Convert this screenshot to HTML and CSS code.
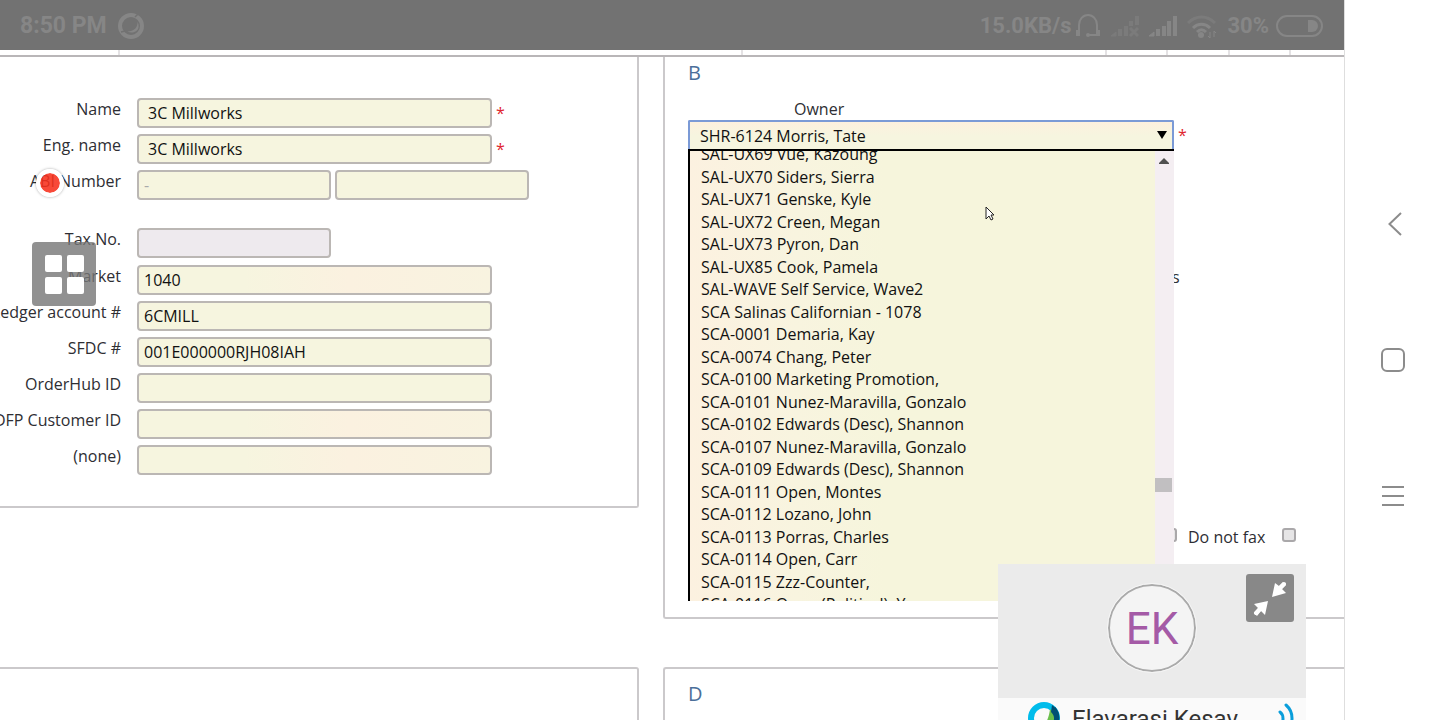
FILE: index.html
```html
<!DOCTYPE html>
<html lang="en">
<head>
<meta charset="utf-8">
<title>Customer details</title>
<link rel="stylesheet" href="styles.css">
</head>
<body>
<main class="screen">
  <header class="status">
    <span class="status-time">8:50 PM</span>
    <svg class="status-app" width="26" height="26" viewBox="0 0 26 26" fill="none" stroke="currentColor">
      <circle cx="13" cy="13" r="11" stroke-width="4"/>
      <path d="M19.500 9c.5 5-3.500 9.500-10 9.500 4 2.500 10 .5 11-4 .3-2 0-4-1-5.500z" fill="currentColor" stroke="none"/>
      <path d="M17 4l3-3M3 19l4-1" stroke="#727272" stroke-width="1.500"/>
    </svg>
    <span class="status-speed">15.0KB/s</span>
    <svg class="status-headset" width="26" height="26" viewBox="0 0 26 26" fill="none" stroke="currentColor" stroke-width="2">
      <path d="M4 20V12a9 10 0 0 1 18 0v8M13 22h9"/>
      <path d="M3 17v6M23 17v6" stroke-width="4"/><circle cx="13" cy="22" r="2" fill="currentColor" stroke="none"/>
    </svg>
    <svg class="status-nosim" width="30" height="24" viewBox="0 0 30 24" fill="none" stroke="#7b7b7b" stroke-width="4">
      <path d="M1 22l5-4v4z" stroke-width="1" fill="#7b7b7b"/><path d="M10 22v-7M16 22V12M21 12V7M27 11V2"/><path d="M20 14l8 8M28 14l-8 8" stroke-width="3"/>
    </svg>
    <svg class="status-signal" width="30" height="24" viewBox="0 0 30 24" fill="none" stroke="currentColor" stroke-width="4">
      <path d="M1 22l5-4v4z" stroke-width="1" fill="currentColor"/><path d="M10 22v-7M16 22V12M21 22V7M27 22V2"/>
    </svg>
    <svg class="status-wifi" width="30" height="26" viewBox="0 0 30 26" fill="none" stroke="#7b7b7b" stroke-width="3">
      <path d="M1 10c8-8 19-8 27 0"/><path d="M6 15c5-5 12-5 17 0M10 19c3-3 6-3 9 0" stroke="currentColor"/>
      <circle cx="14" cy="22" r="3" fill="currentColor" stroke="none"/>
      <path d="M23 19v6l-2-2M27 24v-6l2 2" stroke="currentColor" stroke-width="1"/>
    </svg>
    <span>30%</span>
    <svg class="status-battery" width="48" height="22" viewBox="0 0 48 22" fill="none" stroke="currentColor" stroke-width="2">
      <rect x="1" y="1" width="45" height="20" rx="10"/>
      <path d="M32 5h4a6 6 0 0 1 0 12h-4z" fill="currentColor" stroke="none"/>
    </svg>
  </header>
  <div class="tabs"><i></i><i></i><i></i><i></i><i></i><i></i><i></i></div>

  <div class="panels">
    <section class="panel panel-a">
      <form class="form">
        <div class="row"><label for="name">Name</label><div class="field"><input class="box roomy" id="name" value="3C Millworks"><b class="star">*</b></div></div>
        <div class="row"><label for="eng">Eng. name</label><div class="field"><input class="box roomy" id="eng" value="3C Millworks"><b class="star">*</b></div></div>
        <div class="row"><label for="abi">ABI Number</label><div class="field"><input class="box half faint" id="abi" value="-"><input class="box half" aria-label="ABI Number, part 2"></div></div>
        <div class="row apart"><label for="tax">Tax.No.</label><div class="field"><input class="box half locked" id="tax" readonly></div></div>
        <div class="row"><label for="market">Market</label><div class="field"><input class="box warm" id="market" value="1040"></div></div>
        <div class="row"><label for="ledger">Ledger account #</label><div class="field"><input class="box" id="ledger" value="6CMILL"></div></div>
        <div class="row"><label for="sfdc">SFDC #</label><div class="field"><input class="box" id="sfdc" value="001E000000RJH08IAH"></div></div>
        <div class="row"><label for="hub">OrderHub ID</label><div class="field"><input class="box" id="hub"></div></div>
        <div class="row"><label for="dfp">DFP Customer ID</label><div class="field"><input class="box warm" id="dfp"></div></div>
        <div class="row"><label for="none">(none)</label><div class="field"><input class="box warm" id="none"></div></div>
      </form>
    </section>

    <section class="panel panel-b">
      <h2>B</h2>
      <label class="owner-label" for="owner">Owner</label>
      <div class="owner">
        <div class="combo">
          <select id="owner"><option>SHR-6124 Morris, Tate</option></select>
          <svg class="combo-arrow" width="10" height="8" viewBox="0 0 10 8"><path d="M0 0h10L5 8z"/></svg>
          <div class="menu">
            <ul class="options">
              <li>SAL-UX69 Vue, Kazoung</li>
              <li>SAL-UX70 Siders, Sierra</li>
              <li>SAL-UX71 Genske, Kyle</li>
              <li>SAL-UX72 Creen, Megan</li>
              <li>SAL-UX73 Pyron, Dan</li>
              <li>SAL-UX85 Cook, Pamela</li>
              <li>SAL-WAVE Self Service, Wave2</li>
              <li>SCA Salinas Californian - 1078</li>
              <li>SCA-0001 Demaria, Kay</li>
              <li>SCA-0074 Chang, Peter</li>
              <li>SCA-0100 Marketing Promotion,</li>
              <li>SCA-0101 Nunez-Maravilla, Gonzalo</li>
              <li>SCA-0102 Edwards (Desc), Shannon</li>
              <li>SCA-0107 Nunez-Maravilla, Gonzalo</li>
              <li>SCA-0109 Edwards (Desc), Shannon</li>
              <li>SCA-0111 Open, Montes</li>
              <li>SCA-0112 Lozano, John</li>
              <li>SCA-0113 Porras, Charles</li>
              <li>SCA-0114 Open, Carr</li>
              <li>SCA-0115 Zzz-Counter,</li>
              <li>SCA-0116 Open (Political), Y</li>
            </ul>
            <div class="scroll">
              <svg width="10" height="6" viewBox="0 0 10 6"><path d="M5 0l5 5v1H0V5z" fill="#505050"/></svg>
              <div class="thumb"></div>
            </div>
          </div>
        </div>
        <b class="star">*</b>
      </div>
      <p class="cut-text">s</p>
      <div class="checks">
        <input type="checkbox" aria-label="Do not mail">
        <label for="fax">Do not fax</label>
        <input type="checkbox" id="fax">
      </div>
    </section>

    <section class="panel panel-c"></section>
    <section class="panel panel-d"><h2>D</h2></section>
  </div>

  <span class="record"></span>
  <button class="apps" type="button" aria-label="Apps"><i></i><i></i><i></i><i></i></button>
  <svg class="pointer" width="10" height="15" viewBox="0 0 10 15"><path d="M1 1v12l3-3 2 4 2-1-2-4h3z" fill="#fff" stroke="#222"/></svg>

  <aside class="call">
    <div class="call-video">
      <span class="avatar">EK</span>
      <button class="shrink" type="button" aria-label="Minimize">
        <svg width="48" height="48" viewBox="0 0 48 48" fill="#fff">
          <path d="M26 23l3-14 4 3 4-4 3 3-4 4 4 4z"/><path d="M22 27l-3 14-4-4-4 5-3-3 4-5-4-4z"/>
          <path d="M38 10l-6 6M10 39l6-6" stroke="#fff" stroke-width="4" stroke-linecap="round"/>
        </svg>
      </button>
    </div>
    <div class="call-bar">
      <svg width="32" height="32" viewBox="0 0 32 32" fill="none">
        <circle cx="16" cy="16" r="13" stroke="#00bceb" stroke-width="6"/>
        <path d="M25 7c5 6 4 14-2 19" stroke="#005073" stroke-width="6"/>
        <path d="M22 7c-1 9-4 15-9 20 9 1 15-7 13-16z" fill="#6abf4b"/>
        <path d="M24 3c7 5 9 12 6 20l-5-2c2-5 1-8-2-11z" fill="#005073"/>
      </svg>
      <span class="call-name">Elavarasi Kesav</span>
      <svg width="16" height="32" viewBox="0 0 16 32" fill="none" stroke="#0a9edb" stroke-width="3" stroke-linecap="round">
        <path d="M2 10c4 3 4 10 0 14M8 3c8 7 8 19 0 27"/>
      </svg>
    </div>
  </aside>
</main>

<nav class="rail">
  <button type="button" aria-label="Back"><svg width="26" height="26" viewBox="0 0 26 26"><path d="M21 2L9.500 13 21 24"/></svg></button>
  <button type="button" aria-label="Home"><svg width="26" height="26" viewBox="0 0 26 26"><rect x="2" y="2" width="22" height="22" rx="5"/></svg></button>
  <button type="button" aria-label="Menu"><svg width="26" height="26" viewBox="0 0 26 26"><path d="M2 4h22M2 13h22M2 22h22"/></svg></button>
</nav>
</body>
</html>
```

FILE: styles.css
```css
* { box-sizing: border-box; }
body {
  margin: 0;
  height: 100vh;
  display: flex;
  overflow: hidden;
  background: #fff;
  color: #2e2e33;
  font: 16px/22px "Open Sans", "Noto Sans", sans-serif;
}
button { border: 0; padding: 0; background: none; font: inherit; }
svg { display: block; flex: none; }
h2 { margin: 0; font-size: 20px; line-height: 28px; font-weight: 500; color: #4b6f9a; }

.screen { position: relative; flex: 1; min-width: 0; overflow: hidden; }

/* Status bar */
.status {
  display: flex;
  align-items: center;
  height: 50px;
  padding: 2px 20px 0;
  background: #727272;
  color: #868686;
  font: 700 22px/28px Roboto, sans-serif;
}
.status-time { font-size: 23px; }
.status-app { margin-left: 11px; }
.status-speed { margin-left: auto; }
.status-headset { margin: 0 9px 0 4px; }
.status-nosim { margin-right: 8px; }
.status-signal { margin-right: 9px; }
.status-wifi { margin-right: 10px; }
.status-battery { margin-left: 7px; }

.tabs {
  display: grid;
  grid-template-columns: 120fr 623fr 364fr 61fr 62fr 61fr 53fr;
  height: 7px;
  border-bottom: 2px solid #b9b6b8;
}
.tabs i { border-right: 2px solid #e4e2e4; }
.tabs i:last-child { border: 0; }

/* Panels */
.panels {
  display: grid;
  grid-template-columns: 639fr 681fr;
  column-gap: 24px;
  row-gap: 48px;
  align-items: start;
}
.panel { border: 2px solid #cbc9cb; border-radius: 3px; min-width: 0; }
.panel-a, .panel-c { border-left: 0; border-top-left-radius: 0; border-bottom-left-radius: 0; }
.panel-b, .panel-d { border-right: 0; border-top-right-radius: 0; border-bottom-right-radius: 0; padding-left: 23px; }
.panel-a { border-top: 0; border-top-right-radius: 0; padding: 41px 0 31px; }
.panel-b { border-top: 0; border-top-left-radius: 0; padding-top: 2px; padding-bottom: 69px; }
.panel-c, .panel-d { min-height: 96px; }
.panel-d { padding-top: 11px; }

.form { display: grid; gap: 6px; }
.row { display: grid; grid-template-columns: 121px 1fr; column-gap: 16px; align-items: start; }
.row > label { display: flex; justify-content: flex-end; white-space: nowrap; font-weight: 500; }
.apart { margin-top: 22px; }
.apart ~ .row { position: static; }
.apart + .row { margin-top: 1px; }
.field { display: flex; gap: 4px; }
.box {
  width: 355px;
  height: 30px;
  padding: 1px 5px;
  border: 2px solid #bbb7b4;
  border-radius: 4px;
  background: #f6f5df;
  color: #111;
  font: inherit;
}
.roomy { padding-left: 9px; }
.half { width: 194px; }
.faint { color: #aaa; }
.locked { background: #eeeaee; }
.warm { background: linear-gradient(90deg, #f6f5df 30%, #fbf1e0 60%, #f8f3e0); }
.star { color: #e0262e; font-weight: 400; line-height: 30px; }

/* Owner */
.owner-label { display: block; margin: 11px 0 0 106px; font-weight: 500; }
.owner { display: flex; gap: 4px; }
.combo { position: relative; width: 486px; }
.combo select {
  appearance: none;
  display: block;
  width: 100%;
  height: 29px;
  padding: 0 10px;
  border: 2px solid #7b9ad6;
  border-bottom: 0;
  border-radius: 2px 2px 0 0;
  background: linear-gradient(#fdf0de, #f6f5df 50%);
  color: #111;
  font: inherit;
}
.combo-arrow { position: absolute; right: 7px; top: 11px; }
.menu {
  position: absolute;
  top: 29px;
  left: 0;
  z-index: 1;
  display: flex;
  width: 100%;
  max-height: 452px;
  overflow: hidden;
  border: solid #000;
  border-width: 2px 0 0 2px;
  background: linear-gradient(90deg, #fcf1e0, #f8f4df 22%, #f6f5dc 40%);
  color: #111;
}
.options { flex: 1; margin: -8px 0 0; padding: 0 11px; list-style: none; }
.options li { line-height: 23px; white-space: nowrap; }
.options li:nth-child(even) { line-height: 22px; }
.scroll { width: 19px; padding-top: 7px; background: #f4eef2; }
.scroll svg { margin-left: 4px; }
.thumb { width: 17px; height: 14px; margin-top: 314px; background: #c1bfc1; }

.cut-text { margin: 116px 0 0 484px; }
.checks { display: flex; align-items: center; margin: 238px 0 0 475px; }
.checks label { margin: 0 17px 0 11px; }
.checks input {
  appearance: none;
  width: 14px;
  height: 14px;
  margin: 0 0 4px;
  border: 2px solid #aaa8aa;
  border-radius: 3px;
  background: #e6e5e6;
}

/* Floating items over the page */
.record {
  position: absolute;
  left: 36px;
  top: 169px;
  width: 28px;
  height: 28px;
  border: 4px solid #fff;
  border-radius: 50%;
  background: rgba(247, 48, 28, .88);
  background-clip: padding-box;
  box-shadow: 0 0 3px rgba(0, 0, 0, .35);
}
.apps {
  position: absolute;
  left: 32px;
  top: 242px;
  display: grid;
  grid-template-columns: 17px 17px;
  gap: 5px;
  place-content: center;
  width: 64px;
  height: 64px;
  border-radius: 4px;
  background: rgba(118, 118, 118, .8);
}
.apps i { height: 17px; border-radius: 2px; background: #fff; }
.pointer { position: absolute; left: 985px; top: 206px; z-index: 2; }

.call {
  position: absolute;
  right: 38px;
  top: 564px;
  z-index: 3;
  width: 308px;
  background: #fafafa;
  font-family: Roboto, sans-serif;
}
.call-video { position: relative; display: grid; place-items: center; height: 134px; background: #ebebeb; }
.avatar {
  width: 88px;
  height: 88px;
  margin-top: -6px;
  border: 2px solid #aaa;
  border-radius: 50%;
  outline: 1px solid #f6f6f6;
  background: #f4f4f4;
  color: #a45aa6;
  font-size: 44px;
  line-height: 86px;
  text-align: center;
}
.shrink { position: absolute; right: 12px; top: 10px; border-radius: 3px; background: #888; }
.call-bar { display: flex; align-items: flex-start; padding: 4px 12px 4px 30px; }
.call-name { flex: 1; margin-left: 12px; font-size: 24px; line-height: 34px; color: #333; }

/* Navigation rail */
.rail {
  display: flex;
  flex-direction: column;
  justify-content: center;
  align-items: center;
  gap: 110px;
  width: 96px;
  border-left: 1px solid #dedede;
}
.rail svg { fill: none; stroke: #8c8c8c; stroke-width: 2; }
```
